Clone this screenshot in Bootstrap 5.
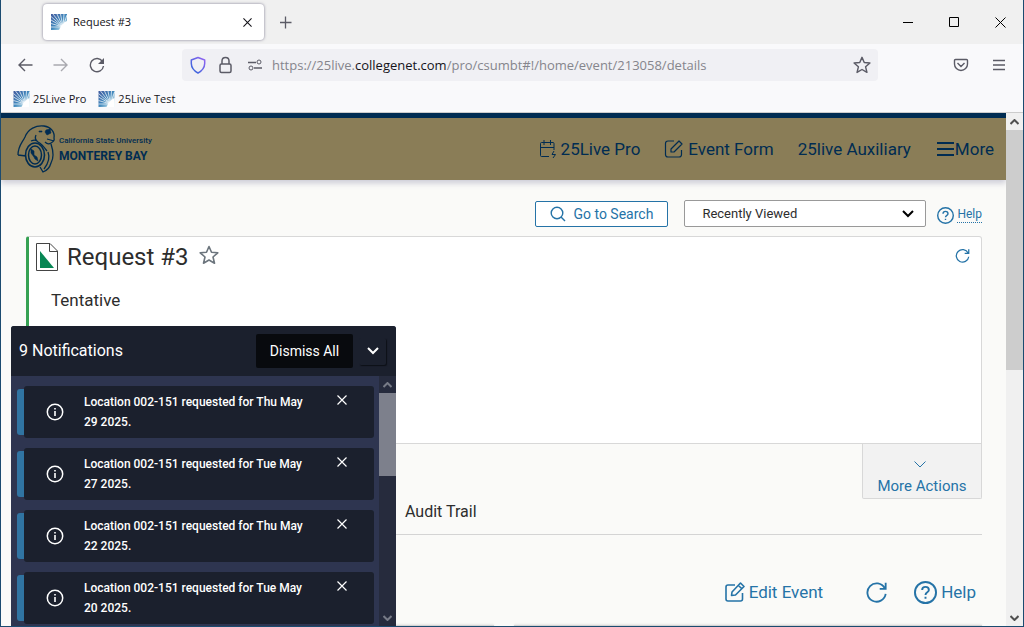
<!DOCTYPE html>
<html lang="en">
<head>
<meta charset="utf-8">
<meta name="viewport" content="width=device-width, initial-scale=1">
<title>Request #3</title>
<link href="https://cdn.jsdelivr.net/npm/bootstrap@5.3.0/dist/css/bootstrap.min.css" rel="stylesheet">
<style>
  :root { --navy: #002c52; --gold: #8a7d57; --blue: #2573a7; --ink: #2d2d2d; }
  body { font-family: Roboto, "Open Sans", sans-serif; font-size: 16px; line-height: 20px; color: var(--ink); background: #fafaf8; }
  svg { display: block; flex: none; fill: none; stroke: currentColor; }
  button { flex: none; }
  .plain { background: none; border: 0; padding: 0; color: inherit; }
  .frame { border: 1px solid #1b4b70; border-top: 0; }

  /* browser chrome */
  .chrome { font-family: "Open Sans", "Noto Sans", sans-serif; font-size: 11px; line-height: 16px; color: #15141a; }
  .tabstrip { height: 44px; background: #f0f0f0; padding-left: 42px; }
  .browser-tab { width: 221px; height: 36px; background: #fff; border-radius: 4px; box-shadow: 0 0 3px rgba(80,75,105,.7); padding: 0 12px 0 8px; gap: 6px; }
  .window-controls { gap: 35px; padding-right: 17px; color: #000; }
  .toolbar { height: 44px; background: #f9f9fb; color: #5b5b66; padding: 0 18px 3px 16px; }
  .history-buttons { gap: 20px; margin-right: 77px; }
  .address { width: 696px; flex: 0 1 696px; height: 32px; background: #f0f0f4; border-radius: 4px; padding: 0 7px; }
  .address-text { font-size: 13px; line-height: 20px; color: #85858c; margin-left: 9px; }
  .address-text b { font-weight: 400; color: #15141a; }
  .bookmarks { height: 25px; background: #f9f9fb; border-bottom: 1px solid #ccc; padding: 0 12px 3px; gap: 12px; }
  .bookmarks a { color: inherit; gap: 3px; }

  /* page header */
  .site-header { height: 67px; background: var(--gold); border-top: 5px solid var(--navy); padding: 0 12px 0 16px; box-shadow: 0 3px 6px rgba(60,60,110,.25); }
  .site-header a { color: var(--navy); }
  .site-nav { font-size: 17px; gap: 24px; }
  .logo-name { font-weight: 700; margin-left: 2px; }
  .name-top { font-size: 8px; line-height: 14px; font-weight: 500; }
  .name-main { font-size: 12px; line-height: 16px; }

  /* page body */
  .content { padding: 20px 24px 0 25px; }
  .search-row { height: 27px; gap: 11px; font-size: 14px; margin-bottom: 9px; }
  .search-button { width: 133px; height: 26px; border: 1px solid var(--blue); border-radius: 2px; background: #fff; color: var(--blue); padding: 0; gap: 7px; margin-right: 5px; }
  .recent { width: 242px; height: 27px; border: 1px solid #999; border-radius: 2px; font-size: 13px; line-height: 19px; padding: 3px 17px; color: var(--ink); background-color: #fff; --bs-form-select-bg-img: none; }
  .help-small { color: var(--blue); gap: 3px; font-size: 12px; line-height: 15px; padding-top: 3px; }
  .help-small span { border-bottom: 1px dotted var(--blue); }
  .summary { height: 208px; background: #fff; border: 1px solid #d8d8d8; border-left: 3px solid #36a153; border-radius: 3px 3px 0 0; padding: 6px 10px 0 7px; }
  .summary h1 { font-size: 24px; line-height: 28px; font-weight: 400; margin: 0 10px 0 9px; }
  .status { margin: 19px 0 0 15px; font-size: 17px; }
  .more-actions { width: 120px; height: 55px; background: #f2f2f2; border: 1px solid #d8d8d8; border-top: 0; border-radius: 0 0 2px 2px; color: var(--blue); padding-top: 17px; font-size: 15px; }
  .view-tabs { border-bottom: 1px solid #d4d4d4; padding: 3px 0 12px 379px; }
  .view-tabs a { color: var(--ink); }
  .actions { color: var(--blue); height: 90px; font-size: 17px; padding: 24px 6px 0 0; gap: 26px; }
  .actions a { color: inherit; gap: 4px; }
  .panels { --bs-gutter-x: 20px; }
  .panel-edge { height: 8px; border: 1px solid #d4d4d4; box-shadow: 0 -1px 2px rgba(0,0,0,.08); }

  /* page scrollbar */
  .page-scroll { width: 17px; background: #f0f0f0; color: #505050; }
  .page-thumb { height: 240px; background: #cdcdcd; }
  .scroll-arrow { height: 17px; flex: none; }

  /* notifications */
  .notices { left: 11px; bottom: 1px; width: 385px; height: 300px; background: #2e3550; border-radius: 3px 3px 0 0; color: #fff; overflow: hidden; }
  .notices-head { height: 50px; background: #1b202d; padding: 0 10px 0 8px; gap: 6px; }
  .dismiss { width: 97px; height: 34px; background: #080a0e; border-radius: 2px; font-size: 14px; }
  .collapse-button { width: 27px; height: 27px; border-radius: 2px; box-shadow: 1px 1px 1px #0d1017; }
  .notice-list { padding: 10px 5px 0 6px; gap: 10px; }
  .notice { height: 52px; flex: none; }
  .notice-mark { width: 7px; height: 46px; background: #3074a2; border-radius: 3px 0 0 3px; }
  .notice-body { background: #1b202d; border-radius: 3px; padding: 6px 27px 6px 22px; font-size: 12px; font-weight: 500; height: 52px; }
  .notice-text { width: 228px; margin-left: 20px; }
  .notice-close { margin-top: 3px; }
  .notice-scroll { width: 17px; background: #262b3d; color: #777b87; }
  .notice-thumb { height: 83px; background: #7d808c; }
</style>
</head>
<body>
<svg width="0" height="0" class="position-absolute" aria-hidden="true">
  <defs>
    <linearGradient id="rays" x1="0" y1="0" x2="1" y2="1"><stop offset="0" stop-color="#405a9e"/><stop offset=".5" stop-color="#4289bd"/><stop offset=".9" stop-color="#d5f0f5"/></linearGradient>
    <symbol id="fav" viewBox="0 0 16 16"><path fill="url(#rays)" stroke="none" d="M0 0H16V16H0z"/><path stroke="#fff" stroke-width=".7" d="M12 13 0 13M12 13 0 9.500M12 13 0 6M12 13 0 2.500M12 13 2 0M12 13 6 0M12 13 9.500 0M12 13 13 0M12 13 16 1"/><path fill="#fff" stroke="none" d="M8 16 10 12 14 8 16 7V16z"/></symbol>
    <symbol id="reload" viewBox="0 0 24 24"><path stroke-width="2" d="M21 8A10 10 0 1 0 22 14M22 2V8.500H15.500"/></symbol>
    <symbol id="help" viewBox="0 0 24 24"><circle cx="12" cy="12" r="11" stroke-width="2"/><path stroke-width="2" d="M8.500 9.500C8.500 5 15.500 5 15.500 9.500C15.500 12 12 11.500 12 14.500M12 16.500V18.500"/></symbol>
    <symbol id="edit" viewBox="0 0 20 20"><path stroke-width="1.600" stroke-linejoin="round" d="M10 3H3Q1 3 1 5V17Q1 19 3 19H15.500Q17.500 19 17.500 17V11M6.500 13.500 7 10 15.500 1 19 4.500 10.500 13zM13.500 3.500 16.800 6.800"/></symbol>
    <symbol id="down" viewBox="0 0 12 8"><path stroke-width="2" d="M1 1 6 6 11 1"/></symbol>
    <symbol id="info" viewBox="0 0 18 18"><circle cx="9" cy="9" r="7.700" stroke-width="1.500"/><path stroke-width="1.600" d="M9 8V13M9 5V6.600"/></symbol>
    <symbol id="cross" viewBox="0 0 10 10"><path stroke-width="1.200" d="M.5.5 9.500 9.500M9.500.5.5 9.500"/></symbol>
    <symbol id="star" viewBox="0 0 20 20"><path stroke-width="1.600" stroke-linejoin="round" d="M10 1.500 12.500 7.300 18.800 7.800 14 12 15.500 18.200 10 15 4.500 18.200 6 12 1.200 7.800 7.500 7.300z"/></symbol>
  </defs>
</svg>

<div class="frame vh-100 d-flex flex-column overflow-hidden position-relative">
  <div class="chrome">
    <div class="tabstrip d-flex align-items-center">
      <div class="browser-tab d-flex align-items-center">
        <svg width="16" height="16"><use href="#fav"/></svg>
        <span class="flex-grow-1">Request #3</span>
        <button class="plain" aria-label="Close tab"><svg width="9" height="9"><use href="#cross"/></svg></button>
      </div>
      <button class="plain ms-3" aria-label="New tab"><svg width="12" height="13" viewBox="0 0 12 13"><path stroke="#5b5b66" stroke-width="1.300" d="M5.500 .5V12.500M0 6.500H11.500"/></svg></button>
      <div class="window-controls d-flex align-items-center ms-auto">
        <button class="plain" aria-label="Minimize"><svg width="11" height="11" viewBox="0 0 11 11"><path d="M0 5.500H10"/></svg></button>
        <button class="plain" aria-label="Maximize"><svg width="11" height="11" viewBox="0 0 11 11"><path d="M.5.5H9.500V9.500H.5z"/></svg></button>
        <button class="plain" aria-label="Close"><svg width="11" height="11" viewBox="0 0 11 11"><path d="M.5.5 10.500 10.500M10.500.5.5 10.500"/></svg></button>
      </div>
    </div>
    <div class="toolbar d-flex align-items-center">
      <div class="history-buttons d-flex align-items-center">
        <button class="plain" aria-label="Back"><svg width="16" height="14" viewBox="0 0 16 14"><path stroke-width="1.400" d="M15.500 7H2M8 1 2 7 8 13"/></svg></button>
        <button class="plain opacity-50" aria-label="Forward"><svg width="16" height="14" viewBox="0 0 16 14"><path stroke-width="1.400" d="M.5 7H14M8 1 14 7 8 13"/></svg></button>
        <button class="plain" aria-label="Reload"><svg width="16" height="16" viewBox="0 0 16 16"><path stroke-width="1.400" d="M13.500 4.500A6.600 6.600 0 1 0 14.500 9"/><path fill="currentColor" stroke="none" d="M15 1V7H9z"/></svg></button>
      </div>
      <div class="address d-flex align-items-center">
        <svg width="18" height="18" viewBox="0 0 18 18"><defs><linearGradient id="sh" x1="0" y1="1" x2="1" y2="0"><stop stop-color="#2c66d8"/><stop offset="1" stop-color="#9563f2"/></linearGradient></defs><path stroke="url(#sh)" stroke-width="1.500" stroke-linejoin="round" d="M9 1.500 15.700 4V7.500Q15.500 13.500 9 17Q2.500 13.500 2.300 7.500V4z"/></svg>
        <svg class="ms-2 me-1" width="20" height="18" viewBox="0 0 20 18"><rect x="5" y="8" width="11" height="8.500" rx="1.500" stroke-width="1.500"/><path stroke-width="1.500" d="M7 8V5Q7 1.500 10.500 1.500Q14 1.500 14 5V8"/></svg>
        <svg class="ms-2" width="16" height="12" viewBox="0 0 16 12"><path stroke-width="1.400" d="M1 3.500H9M7 9H15"/><circle cx="12" cy="3" r="2"/><circle cx="4" cy="9" r="2"/></svg>
        <span class="address-text flex-grow-1">https://25live.<b>collegenet.com</b>/pro/csumbt#!/home/event/213058/details</span>
        <button class="plain" aria-label="Bookmark this page"><svg width="18" height="18"><use href="#star"/></svg></button>
      </div>
      <button class="plain ms-auto" aria-label="Save to Pocket"><svg width="16" height="14" viewBox="0 0 16 14"><path stroke-width="1.400" d="M2.500 1.500H13.500Q14.500 1.500 14.500 2.500V6A6.500 6.500 0 0 1 1.500 6V2.500Q1.500 1.500 2.500 1.500zM4.500 5 8 8.500 11.500 5"/></svg></button>
      <button class="plain ms-4" aria-label="Menu"><svg width="12" height="12" viewBox="0 0 12 12"><path stroke-width="1.300" d="M0 1.500H12M0 6H12M0 10.500H12"/></svg></button>
    </div>
    <nav class="bookmarks d-flex align-items-center">
      <a href="#" class="d-flex align-items-center text-decoration-none"><svg width="17" height="16"><use href="#fav"/></svg>25Live Pro</a>
      <a href="#" class="d-flex align-items-center text-decoration-none"><svg width="17" height="16"><use href="#fav"/></svg>25Live Test</a>
    </nav>
  </div>

  <div class="d-flex flex-grow-1 overflow-hidden">
    <main class="flex-grow-1 overflow-hidden">
      <header class="site-header d-flex align-items-center">
        <a href="#" class="d-flex align-items-center text-decoration-none">
          <svg width="40" height="50" viewBox="0 0 40 50" stroke-width="1.300">
            <path d="M1 31C1 22 5 19 8 13C11 5 19 1 27 2C34 3 38 8 37 14Q38 17 34 19Q31 21 28 18M1 31 9 32M19 11Q17 15 21 18Q25 20 30 27M34 20Q38 32 34 39Q32 46 26 48L23 43M31 28Q34 36 27 45M14 17Q19 15 21 18M30 15 37 17"/>
            <path fill="currentColor" d="M29 6 33 5 34 9 30 11 28 8zM22 7H25V8H22zM14 25 17 27 17 31 20 33 21 37 18 35 17 33 14 29z" stroke-width=".6"/>
            <ellipse cx="18" cy="31" rx="9.500" ry="12" stroke-width="1.600"/><ellipse cx="18" cy="31" rx="6.500" ry="9" stroke-width="1.500"/>
          </svg>
          <div class="logo-name"><div class="name-top">California State University</div><div class="name-main">MONTEREY BAY</div></div>
        </a>
        <nav class="site-nav d-flex align-items-center ms-auto">
          <a href="#" class="d-flex align-items-center gap-1 text-decoration-none"><svg width="18" height="19" viewBox="0 0 18 19"><path d="M10 16.500H2.500Q1.500 16.500 1.500 15.500V3.500Q1.500 2.500 2.500 2.500H14Q15 2.500 15 3.500V10M1.500 7.500H15M5 0V5M11.500 0V5M15 11 13 14.500H16.500L14 18"/></svg>25Live Pro</a>
          <a href="#" class="d-flex align-items-center text-decoration-none"><svg class="me-1" width="20" height="20" viewBox="0 0 20 20"><path stroke-width="1.200" stroke-linejoin="round" d="M10 2H4Q1.500 2 1.500 4.500V15.500Q1.500 18 4 18H15Q17.500 18 17.500 15.500V11M7 12.500V10L15 2 18 5 10 13H7z"/></svg>Event Form</a>
          <a href="#" class="text-decoration-none">25live Auxiliary</a>
          <a href="#" class="d-flex align-items-center text-decoration-none"><svg width="20" height="14" viewBox="0 0 20 14"><path stroke-width="2" d="M2 1H19M2 7H19M2 13H19"/></svg>More</a>
        </nav>
      </header>

      <div class="content">
        <div class="search-row d-flex align-items-center justify-content-end">
          <button class="search-button d-flex align-items-center justify-content-center"><svg width="16" height="16" viewBox="0 0 16 16"><circle cx="7" cy="7" r="5.800" stroke-width="1.400"/><path stroke-width="1.400" d="M11 11 15 15"/></svg>Go to Search</button>
          <div class="position-relative">
            <select class="form-select recent" aria-label="Search type"><option>Recently Viewed</option></select>
            <svg class="position-absolute top-50 end-0 translate-middle-y me-1 pe-1 pe-none" width="24" height="8" viewBox="0 0 12 8" style="color:#000"><use href="#down" width="12" height="8"/></svg>
          </div>
          <a href="#" class="help-small d-flex align-items-center text-decoration-none"><svg width="17" height="17"><use href="#help"/></svg><span>Help</span></a>
        </div>

        <section class="summary">
          <div class="d-flex align-items-center">
            <svg width="22" height="28" viewBox="0 0 22 28"><path fill="#fff" stroke="#444" d="M.5.5H14L21.500 8V27.500H.5zM13.500.5V8.500H21.500"/><path fill="#078654" stroke="none" d="M4 8V25H18z"/></svg>
            <h1>Request #3</h1>
            <button class="plain text-secondary mb-1" aria-label="Add to favorites"><svg width="20" height="20"><use href="#star"/></svg></button>
            <button class="plain ms-auto mb-1" aria-label="Refresh" style="color:var(--blue)"><svg width="17" height="15"><use href="#reload"/></svg></button>
          </div>
          <div class="status">Tentative</div>
        </section>
        <div class="d-flex justify-content-end">
          <button class="plain more-actions d-flex flex-column align-items-center"><svg class="mb-2 me-1" width="12" height="7" viewBox="0 0 12 7"><path d="M.5.5 6 6 11.500.5"/></svg><span>More Actions</span></button>
        </div>
        <nav class="view-tabs"><a href="#" class="text-decoration-none">Audit Trail</a></nav>
        <div class="actions d-flex justify-content-end align-items-center">
          <a href="#" class="d-flex align-items-center text-decoration-none me-3"><svg width="20" height="20"><use href="#edit"/></svg>Edit Event</a>
          <button class="plain" aria-label="Refresh"><svg width="23" height="22"><use href="#reload"/></svg></button>
          <a href="#" class="d-flex align-items-center text-decoration-none"><svg width="23" height="23"><use href="#help"/></svg>Help</a>
        </div>
        <div class="row panels"><div class="col-6"><div class="panel-edge"></div></div><div class="col-6"><div class="panel-edge"></div></div></div>
      </div>
    </main>

    <div class="page-scroll d-flex flex-column flex-shrink-0" aria-hidden="true">
      <div class="scroll-arrow d-flex align-items-center justify-content-center"><svg width="9" height="6" viewBox="0 0 9 6"><path stroke-width="2" d="M.5 5 4.500 1 8.500 5"/></svg></div>
      <div class="page-thumb"></div>
      <div class="scroll-arrow d-flex align-items-center justify-content-center mt-auto"><svg width="9" height="6" viewBox="0 0 9 6"><path stroke-width="2" d="M.5 1 4.500 5 8.500 1"/></svg></div>
    </div>
  </div>
</div>

<aside class="notices position-fixed d-flex flex-column">
  <div class="notices-head d-flex align-items-center flex-shrink-0">
    <span class="flex-grow-1">9 Notifications</span>
    <button class="plain dismiss">Dismiss All</button>
    <button class="plain collapse-button d-flex align-items-center justify-content-center" aria-label="Collapse"><svg width="12" height="8"><use href="#down"/></svg></button>
  </div>
  <div class="d-flex flex-grow-1 overflow-hidden">
    <div class="notice-list d-flex flex-column flex-grow-1 overflow-hidden">
      <div class="notice d-flex align-items-center"><div class="notice-mark"></div><div class="notice-body d-flex flex-grow-1"><svg class="align-self-center" width="18" height="18"><use href="#info"/></svg><div class="notice-text">Location 002-151 requested for Thu May 29 2025.</div><button class="plain notice-close ms-auto align-self-start" aria-label="Dismiss"><svg width="10" height="10"><use href="#cross"/></svg></button></div></div>
      <div class="notice d-flex align-items-center"><div class="notice-mark"></div><div class="notice-body d-flex flex-grow-1"><svg class="align-self-center" width="18" height="18"><use href="#info"/></svg><div class="notice-text">Location 002-151 requested for Tue May 27 2025.</div><button class="plain notice-close ms-auto align-self-start" aria-label="Dismiss"><svg width="10" height="10"><use href="#cross"/></svg></button></div></div>
      <div class="notice d-flex align-items-center"><div class="notice-mark"></div><div class="notice-body d-flex flex-grow-1"><svg class="align-self-center" width="18" height="18"><use href="#info"/></svg><div class="notice-text">Location 002-151 requested for Thu May 22 2025.</div><button class="plain notice-close ms-auto align-self-start" aria-label="Dismiss"><svg width="10" height="10"><use href="#cross"/></svg></button></div></div>
      <div class="notice d-flex align-items-center"><div class="notice-mark"></div><div class="notice-body d-flex flex-grow-1"><svg class="align-self-center" width="18" height="18"><use href="#info"/></svg><div class="notice-text">Location 002-151 requested for Tue May 20 2025.</div><button class="plain notice-close ms-auto align-self-start" aria-label="Dismiss"><svg width="10" height="10"><use href="#cross"/></svg></button></div></div>
    </div>
    <div class="notice-scroll d-flex flex-column flex-shrink-0" aria-hidden="true">
      <div class="scroll-arrow d-flex align-items-center justify-content-center"><svg width="9" height="6" viewBox="0 0 9 6"><path stroke-width="2" d="M.5 5 4.500 1 8.500 5"/></svg></div>
      <div class="notice-thumb"></div>
      <div class="scroll-arrow d-flex align-items-center justify-content-center mt-auto"><svg width="9" height="6" viewBox="0 0 9 6"><path stroke-width="2" d="M.5 1 4.500 5 8.500 1"/></svg></div>
    </div>
  </div>
</aside>
<script src="https://cdn.jsdelivr.net/npm/bootstrap@5.3.0/dist/js/bootstrap.bundle.min.js"></script>
</body>
</html>
